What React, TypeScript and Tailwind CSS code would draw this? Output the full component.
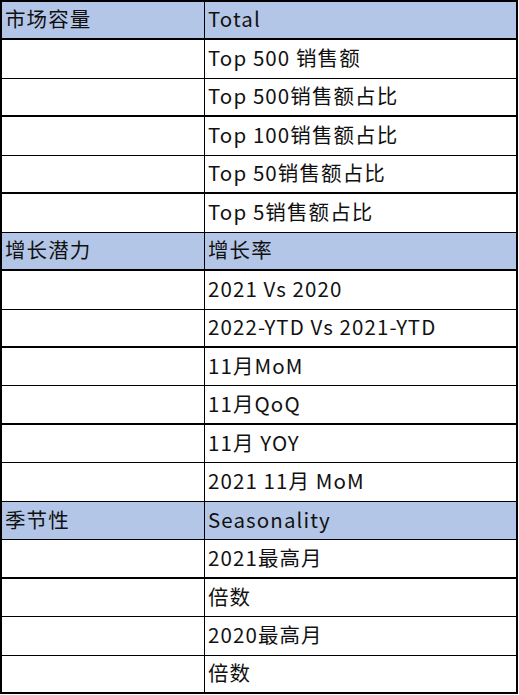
const ROWS: { a: string; b: string; head?: boolean; thick?: boolean }[] = [
  { a: '市场容量', b: 'Total', head: true, thick: true },
  { a: '', b: 'Top 500 销售额' },
  { a: '', b: 'Top 500销售额占比', thick: true },
  { a: '', b: 'Top 100销售额占比' },
  { a: '', b: 'Top 50销售额占比', thick: true },
  { a: '', b: 'Top 5销售额占比' },
  { a: '增长潜力', b: '增长率', head: true, thick: true },
  { a: '', b: '2021 Vs 2020' },
  { a: '', b: '2022-YTD Vs 2021-YTD', thick: true },
  { a: '', b: '11月MoM' },
  { a: '', b: '11月QoQ', thick: true },
  { a: '', b: '11月 YOY' },
  { a: '', b: '2021 11月 MoM' },
  { a: '季节性', b: 'Seasonality', head: true },
  { a: '', b: '2021最高月', thick: true },
  { a: '', b: '倍数' },
  { a: '', b: '2020最高月' },
  { a: '', b: '倍数', thick: true },
];

export default function App() {
  return (
    <div
      className="h-[695px] w-[519px] bg-white text-[20.5px] leading-none tracking-[1.1px] text-[#111]"
      style={{ fontFamily: '"Noto Sans CJK SC", "Noto Sans", sans-serif' }}
    >
      <div className="grid h-[694px] w-[518px] grid-cols-[203px_1fr] grid-rows-[repeat(18,1fr)] border-t-2 border-l-2 border-r-2 border-black">
        {ROWS.map((r, i) => {
          const bottom = r.thick ? 'border-b-2' : 'border-b';
          const bg = r.head ? 'bg-[#b4c6e7]' : 'bg-white';
          return [
            <div
              key={`a${i}`}
              className={`flex items-center border-r border-black pb-[3px] pl-[3px] ${bottom} ${bg}`}
            >
              {r.a}
            </div>,
            <div
              key={`b${i}`}
              className={`flex items-center border-black pb-[3px] pl-[3px] ${bottom} ${bg}`}
            >
              {r.b}
            </div>,
          ];
        })}
      </div>
    </div>
  );
}
